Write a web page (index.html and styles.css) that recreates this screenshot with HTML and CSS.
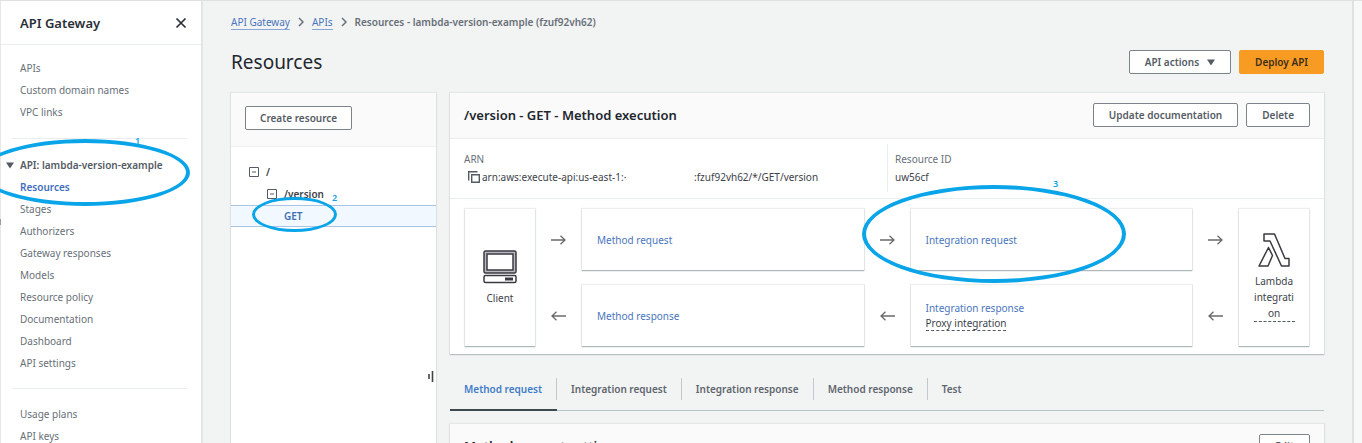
FILE: index.html
```html
<!DOCTYPE html>
<html lang="en">
<head>
<meta charset="utf-8">
<title>API Gateway - Resources</title>
<link rel="stylesheet" href="styles.css">
</head>
<body>
<div class="app">
  <aside class="sidebar">
    <header class="sidebar-head">
      <h2 class="sidebar-title">API Gateway</h2>
      <button class="close" type="button" aria-label="Close navigation">
        <svg width="12" height="12" viewBox="0 0 12 12"><path d="M1.5 1.5l9 9M10.500 1.500l-9 9" fill="none" stroke="#2a2f36" stroke-width="1.700"/></svg>
      </button>
    </header>
    <nav class="nav">
      <ul class="nav-list">
        <li><a href="#">APIs</a></li>
        <li><a href="#">Custom domain names</a></li>
        <li><a href="#">VPC links</a></li>
      </ul>
      <div class="nav-group">
        <button class="nav-toggle" type="button"><svg width="8" height="7" viewBox="0 0 8 7"><path d="M0 .5h8L4 6.500z" fill="#545b64"/></svg>API: lambda-version-example</button>
        <ul class="nav-list">
          <li><a class="current" href="#">Resources</a></li>
          <li><a href="#">Stages</a></li>
          <li><a href="#">Authorizers</a></li>
          <li><a href="#">Gateway responses</a></li>
          <li><a href="#">Models</a></li>
          <li><a href="#">Resource policy</a></li>
          <li><a href="#">Documentation</a></li>
          <li><a href="#">Dashboard</a></li>
          <li><a href="#">API settings</a></li>
        </ul>
      </div>
      <ul class="nav-list nav-last">
        <li><a href="#">Usage plans</a></li>
        <li><a href="#">API keys</a></li>
      </ul>
    </nav>
  </aside>

  <main class="main">
    <nav class="crumbs" aria-label="Breadcrumb">
      <a href="#">API Gateway</a>
      <svg width="6" height="10" viewBox="0 0 6 10"><path d="M1 1l4 4-4 4" fill="none" stroke="#687078" stroke-width="1.500"/></svg>
      <a href="#">APIs</a>
      <svg width="6" height="10" viewBox="0 0 6 10"><path d="M1 1l4 4-4 4" fill="none" stroke="#687078" stroke-width="1.500"/></svg>
      <span class="crumb-now">Resources - lambda-version-example (fzuf92vh62)</span>
    </nav>
    <div class="page-head">
      <h1 class="page-title">Resources</h1>
      <div class="actions">
        <button class="btn" type="button">API actions <svg width="8" height="7" viewBox="0 0 8 7"><path d="M0 .5h8L4 6.500z" fill="#545b64"/></svg></button>
        <button class="btn btn-primary" type="button">Deploy API</button>
      </div>
    </div>

    <div class="columns">
      <section class="panel tree-panel">
        <div class="tree-head"><button class="btn" type="button">Create resource</button></div>
        <ul class="tree">
          <li class="tree-row"><svg width="10" height="10" viewBox="0 0 10 10"><path d="M.5.500h9v9h-9zM3 5h4" fill="none" stroke="#545b64"/></svg>/</li>
          <li class="tree-row level-1"><svg width="10" height="10" viewBox="0 0 10 10"><path d="M.5.500h9v9h-9zM3 5h4" fill="none" stroke="#545b64"/></svg>/version</li>
          <li class="tree-row level-2 selected">GET</li>
        </ul>
        <svg class="grip" width="6" height="11" viewBox="0 0 6 11"><path d="M1 3v5M4.500 0v11" fill="none" stroke="#3c434b" stroke-width="1.600"/></svg>
      </section>

      <div class="detail">
        <section class="panel">
          <header class="panel-head">
            <h2 class="panel-title">/version - GET - Method execution</h2>
            <div class="actions">
              <button class="btn" type="button">Update documentation</button>
              <button class="btn" type="button">Delete</button>
            </div>
          </header>
          <dl class="facts">
            <div class="fact">
              <dt>ARN</dt>
              <dd><svg class="copy" width="12" height="12" viewBox="0 0 12 12"><path d="M.7 9.500V.700h8.800M3.700 3.700h7.600v7.600H3.700z" fill="none" stroke="#545b64" stroke-width="1.400"/></svg><span class="arn-start">arn:aws:execute-api:us-east-1:·</span><span>:fzuf92vh62/*/GET/version</span></dd>
            </div>
            <div class="fact">
              <dt>Resource ID</dt>
              <dd>uw56cf</dd>
            </div>
          </dl>
          <div class="flow">
            <div class="box endpoint">
              <svg width="34" height="34" viewBox="0 0 34 34" fill="none" stroke="#3a3a42" stroke-width="1.500"><rect x="1" y="1" width="32" height="22" rx="1.500" fill="#b9b9bf"/><rect x="4" y="4" width="26" height="16" fill="#fff"/><rect x="1" y="25.500" width="32" height="7" rx="1.500"/><path d="M22 29h8" stroke-width="3"/></svg>
              <span>Client</span>
            </div>
            <svg class="arrow" width="15" height="10" viewBox="0 0 15 10"><path d="M0 5h14M9.500.700L14 5 9.500 9.300" fill="none" stroke="#6b6b6b" stroke-width="1.300"/></svg>
            <div class="box step"><a href="#">Method request</a></div>
            <svg class="arrow" width="15" height="10" viewBox="0 0 15 10"><path d="M0 5h14M9.500.700L14 5 9.500 9.300" fill="none" stroke="#6b6b6b" stroke-width="1.300"/></svg>
            <div class="box step"><a href="#">Integration request</a></div>
            <svg class="arrow" width="15" height="10" viewBox="0 0 15 10"><path d="M0 5h14M9.500.700L14 5 9.500 9.300" fill="none" stroke="#6b6b6b" stroke-width="1.300"/></svg>
            <div class="box endpoint">
              <svg width="32" height="34" viewBox="0 0 32 34" fill="none" stroke="#3a3a42" stroke-width="1.500" stroke-linejoin="round"><path d="M6 1h10.500l10.500 24.500h4V33h-7.500L12 8H6zM10.500 14.500l4 8L10 33H1z"/></svg>
              <span class="hint endpoint-name">Lambda integrati<wbr>on</span>
            </div>
            <svg class="arrow" width="15" height="10" viewBox="0 0 15 10"><path d="M15 5H1M5.500.700L1 5l4.500 4.300" fill="none" stroke="#6b6b6b" stroke-width="1.300"/></svg>
            <div class="box step"><a href="#">Method response</a></div>
            <svg class="arrow" width="15" height="10" viewBox="0 0 15 10"><path d="M15 5H1M5.500.700L1 5l4.500 4.300" fill="none" stroke="#6b6b6b" stroke-width="1.300"/></svg>
            <div class="box step"><a href="#">Integration response</a><span class="hint">Proxy integration</span></div>
            <svg class="arrow" width="15" height="10" viewBox="0 0 15 10"><path d="M15 5H1M5.500.700L1 5l4.500 4.300" fill="none" stroke="#6b6b6b" stroke-width="1.300"/></svg>
          </div>
        </section>

        <div class="tabs" role="tablist">
          <button class="tab active" role="tab" aria-selected="true" type="button"><span>Method request</span></button>
          <button class="tab" role="tab" type="button"><span>Integration request</span></button>
          <button class="tab" role="tab" type="button"><span>Integration response</span></button>
          <button class="tab" role="tab" type="button"><span>Method response</span></button>
          <button class="tab" role="tab" type="button"><span>Test</span></button>
        </div>

        <section class="panel">
          <header class="panel-head">
            <h2 class="panel-title">Method request settings</h2>
            <div class="actions"><button class="btn" type="button">Edit</button></div>
          </header>
        </section>
      </div>
    </div>
  </main>
  <div class="edge"></div>

  <div class="scroll-mark"></div>
  <div class="mark mark-1"></div><span class="num num-1">1</span>
  <div class="mark mark-2"></div><span class="num num-2">2</span>
  <div class="mark mark-3"></div><span class="num num-3">3</span>
</div>
</body>
</html>
```
FILE: styles.css
```css
* { box-sizing: border-box; }

body {
  margin: 0;
  font: 10px/16px "Noto Sans", "Open Sans", sans-serif;
  color: #3d434a;
  background: #f2f3f3;
}

h1, h2, ul, dl, dd { margin: 0; padding: 0; }
ul { list-style: none; }
svg { display: block; flex: none; }
a { color: #4a76bd; text-decoration: none; }
button { font: inherit; color: inherit; cursor: pointer; }

.app {
  position: relative;
  display: flex;
  height: 100vh;
  overflow: hidden;
  border-top: 1px solid #dfe1e1;
}

/* Side navigation */
.sidebar {
  flex: none;
  width: 203px;
  background: #fff;
  border-left: 1px solid #e6e8e8;
  border-right: 2px solid #e3e5e5;
}
.sidebar-head {
  display: flex;
  align-items: center;
  justify-content: space-between;
  height: 44px;
  padding: 0 14px 0 19px;
  border-bottom: 1px solid #eaeded;
}
.sidebar-title { font-size: 13px; font-weight: 600; color: #2a2f36; }
.close { padding: 0; border: 0; background: none; }
.nav { padding: 12px 14px 0 11px; }
.nav-list { padding-left: 8px; }
.nav-list a { display: block; line-height: 22px; color: #687078; }
.nav-list .current { font-weight: 600; color: #3f6fbe; }
.nav-group {
  margin: 15px 0 14px;
  padding: 15px 0 14px;
  border: solid #eaeded;
  border-width: 1px 0;
}
.nav-toggle {
  display: flex;
  align-items: center;
  gap: 6px;
  margin-left: -6px;
  padding: 0;
  border: 0;
  background: none;
  font-weight: 600;
  line-height: 22px;
  color: #545b64;
  white-space: nowrap;
}
.scroll-mark { position: absolute; left: 0; top: 218px; width: 1px; height: 6px; background: #9a9a9a; }

/* Page */
.main { flex: 1; min-width: 0; padding: 13px 28px 0; }
.edge { flex: none; width: 10px; background: #f7f8f8; border-left: 2px solid #dfe2e2; }
.crumbs { display: flex; align-items: center; gap: 8px; }
.crumbs a { line-height: 14px; border-bottom: 1px solid #8aa6d6; }
.crumb-now { font-weight: 600; color: #687078; }
.page-head {
  display: flex;
  align-items: center;
  justify-content: space-between;
  margin: 20px 0 19px;
}
.page-title { font-size: 19px; font-weight: 400; line-height: 24px; color: #22272e; }
.actions { display: flex; gap: 8px; }
.btn {
  display: flex;
  align-items: center;
  gap: 8px;
  height: 24px;
  padding: 0 14px;
  border: 1px solid #7d838b;
  border-radius: 2px;
  background: #fff;
  font-weight: 600;
  color: #545b64;
  white-space: nowrap;
}
.actions .btn { padding: 0 15px; }
.actions .btn-primary { border-color: #f79b22; background: #f79b22; color: #3b2f1c; }

.columns { display: grid; grid-template-columns: 205px minmax(0, 1fr); gap: 14px; }
.panel { background: #fff; box-shadow: 0 1px 1px #b9c0c2, 0 0 1px 1px #e4e7e8; }

/* Resource tree */
.tree-panel { position: relative; min-height: 400px; }
.tree-head { display: flex; padding: 13px 14px 16px; background: #fafafa; border-bottom: 1px solid #f0f1f1; }
.tree { padding-top: 14px; }
.tree-row {
  display: flex;
  align-items: center;
  gap: 7px;
  height: 22px;
  padding-left: 18px;
  font-weight: 600;
}
.level-1 { padding-left: 36px; }
.level-2 { padding-left: 53px; }
.selected { border: solid #a9c4e4; border-width: 1px 0; background: #f1f8ff; color: #3f6fb5; }
.grip { position: absolute; right: 2px; top: 278px; }

/* Detail */
.panel-head {
  display: flex;
  align-items: center;
  justify-content: space-between;
  padding: 10px 14px 11px;
  background: #fafafa;
  border-bottom: 1px solid #eaeded;
}
.panel-title { font-size: 13px; font-weight: 600; line-height: 20px; color: #22272e; }
.facts {
  display: grid;
  grid-template-columns: 1fr 1fr;
  padding: 5px 0 6px;
  border-bottom: 1px solid #eaeded;
}
.fact { padding: 6px 0 6px 14px; }
.fact + .fact { padding-left: 7px; border-left: 1px solid #eaeded; }
.fact dt { line-height: 18px; color: #687078; }
.fact dd { display: flex; align-items: center; line-height: 18px; }
.copy { margin: 0 2px 0 4px; }
.arn-start { flex: none; width: 212px; }

.flow {
  display: grid;
  grid-template-columns: 70px 47px 1fr 47px 1fr 47px 70px;
  grid-auto-rows: 61px;
  gap: 15px 0;
  padding: 10px 15px 8px;
}
.box {
  display: flex;
  flex-direction: column;
  justify-content: center;
  background: #fff;
  box-shadow: 0 1px 1px #aeb7ba, 0 0 1px 1px #eceeee;
}
.endpoint { grid-row: span 2; align-items: center; gap: 6px; text-align: center; }
.endpoint-name { width: 41px; }
.step { align-items: flex-start; padding-left: 15px; }
.hint { border-bottom: 1px dashed #545b64; line-height: 16px; }
.step .hint { line-height: 14px; }
.arrow { place-self: center; }

.tabs { display: flex; margin: 20px 0 13px; border-bottom: 1px solid #b8c4c5; }
.tab {
  margin-bottom: -1px;
  padding: 4px 0 9px;
  border: 0;
  border-bottom: 2px solid transparent;
  background: none;
  font-weight: 600;
  color: #5f666e;
}
.tab span { display: block; padding: 3px 14px; border-right: 1px solid #c2c9ca; }
.tab:last-child span { border-right: 0; }
.tab.active { border-bottom-color: #3f474f; color: #3f7dc8; }

/* Annotations drawn over the page */
.mark { position: absolute; border: 4px solid #09a5e8; border-radius: 50%; pointer-events: none; }
.mark-1 { left: -20px; top: 138px; width: 210px; height: 67px; }
.mark-2 { left: 252px; top: 196px; width: 85px; height: 35px; border-width: 3px; }
.mark-3 { left: 862px; top: 184px; width: 264px; height: 98px; }
.num { position: absolute; font-size: 9px; font-weight: 600; line-height: 12px; color: #09a5e8; }
.num-1 { left: 135px; top: 134px; }
.num-2 { left: 332px; top: 191px; }
.num-3 { left: 1053px; top: 177px; }
```
